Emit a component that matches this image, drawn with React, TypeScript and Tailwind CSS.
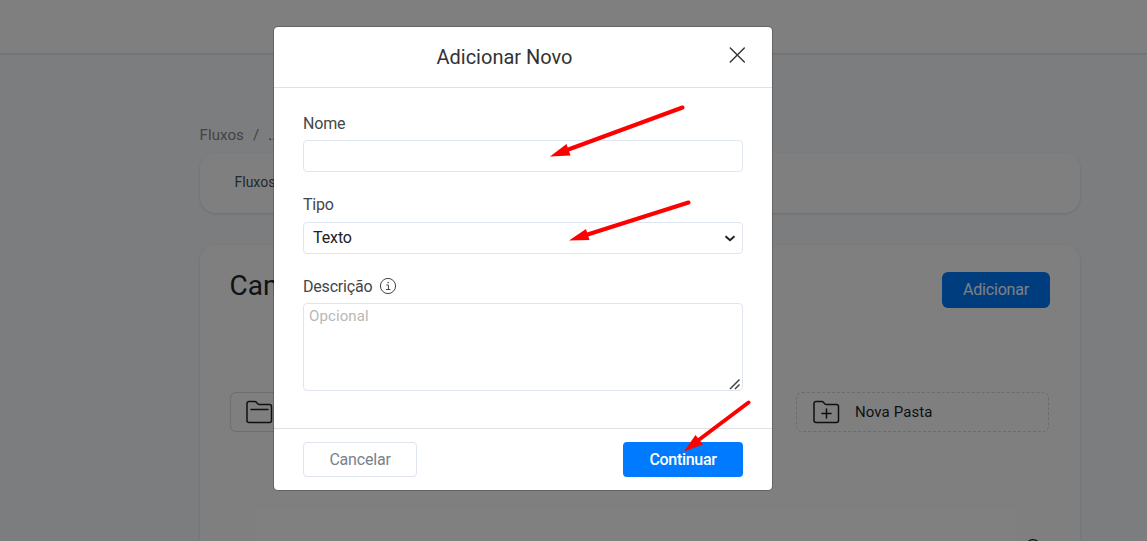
import type { ReactNode } from "react";

function FolderIcon({ plus = false }: { plus?: boolean }) {
  return (
    <svg className="-mt-px -ml-px h-6 w-7 shrink-0" viewBox="0 0 28 24" fill="none" stroke="#1f1f24" strokeWidth="1.5" strokeLinecap="round" strokeLinejoin="round">
      <path d="M2 20.5V3.500a2 2 0 0 1 2-2h5.700c.9 0 1.300.3 1.900 1l1.400 1.500c.4.4.8.5 1.400.5h10.100a2 2 0 0 1 2 2v14a2 2 0 0 1-2 2H4a2 2 0 0 1-2-2Z" />
      {plus ? <path d="M14.500 9v9M10 13.500h9" /> : <path d="M6 9.500h17" />}
    </svg>
  );
}

function InfoIcon() {
  return (
    <svg className="size-4.5" viewBox="0 0 18 18" fill="none" stroke="#444" strokeWidth="1">
      <circle cx="9" cy="9" r="7.600" />
      <path d="M7.400 8h2v4.500M7 12.500h4.400" />
      <circle cx="9.100" cy="5.600" r="0.8" fill="#444" stroke="none" />
    </svg>
  );
}

function Page() {
  return (
    <div className="flex h-full flex-col bg-[#f8fafd]">
      <header className="h-[55px] shrink-0 border-b-2 border-[#e9ebee] bg-white" />
      <main className="ml-[200px] w-[880px] pt-[69px]">
        <nav className="-ml-[0.5px] flex h-[29px] items-start text-[15px] leading-[22px] tracking-[0.1px] text-[#85878a]">
          <span>Fluxos</span>
          <span className="ml-[9px]">/</span>
          <span className="ml-[9px] text-[#444]">...</span>
        </nav>
        <section className="flex h-[60px] items-center rounded-2xl bg-white pb-0.5 pl-[34.5px] text-sm text-[#465060] shadow-[0_1px_3px_rgba(0,0,0,0.12)]">
          <span>Fluxos</span>
        </section>
        <section className="mt-8 h-[400px] rounded-2xl bg-white px-[30px] pt-[27px] shadow-[0_1px_3px_rgba(0,0,0,0.12)]">
          <div className="flex h-9 items-center justify-between">
            <h1 className="-mt-2 -ml-[0.5px] text-[28px] text-[#212529]">Cam</h1>
            <button className="h-9 w-[108px] rounded-md bg-[#007bff] text-base tracking-[-0.2px] text-white">Adicionar</button>
          </div>
          <div className="mt-[84px] flex justify-between pr-px">
            <div className="flex h-10 w-[253px] items-center rounded-md border border-[#dcdcdc] pl-[15px]">
              <FolderIcon />
            </div>
            <div className="flex h-10 w-[253px] items-center gap-[15px] rounded-md border border-dashed border-[#d8d8d8] pl-4">
              <FolderIcon plus />
              <span className="text-[15px] tracking-[0.1px] text-[#212529]">Nova Pasta</span>
            </div>
          </div>
          <div className="mt-[107px] mr-[9px] flex justify-end">
            <svg className="size-4" viewBox="0 0 16 16" fill="none" stroke="#222" strokeWidth="1.300">
              <circle cx="8" cy="7.600" r="7" />
            </svg>
          </div>
        </section>
      </main>
    </div>
  );
}

function Label({ children }: { children: ReactNode }) {
  return <div className="flex h-6 items-center gap-[7px] text-base tracking-[-0.2px] text-[#444649]">{children}</div>;
}

function Modal() {
  return (
    <div className="flex h-[465px] w-[500px] flex-col rounded-[5px] border border-black/20 bg-white bg-clip-padding">
      <div className="flex h-[61px] shrink-0 items-center border-b border-[#dee2e6] pr-[27px]">
        <h2 className="grow pl-[6px] text-center text-xl text-[#333]">Adicionar Novo</h2>
        <svg className="-mt-[5px] size-4" viewBox="0 0 16 16" fill="none" stroke="#333" strokeWidth="1.400" strokeLinecap="round">
          <path d="m1.300 1 14 14M15.300 1l-14 14" />
        </svg>
      </div>
      <div className="flex grow flex-col px-[29px] pt-6">
        <Label>Nome</Label>
        <input className="mt-1 h-8 shrink-0 rounded-[4px] border border-[#dfe5ee]" />
        <div className="mt-[21px]">
          <Label>Tipo</Label>
        </div>
        <div className="mt-[5px] flex h-8 shrink-0 items-center justify-between rounded-[4px] border border-[#dfe5ee] pr-[6px] pl-[9px] text-base tracking-[-0.1px] text-[#222]">
          <span>Texto</span>
          <svg className="h-2 w-3" viewBox="0 0 12 8" fill="none" stroke="#222" strokeWidth="2">
            <path d="M1.500 2.200 6 6.200l4.500-4" />
          </svg>
        </div>
        <div className="mt-[21px]">
          <Label>
            <span>Descrição</span>
            <span className="-mt-0.5">
              <InfoIcon />
            </span>
          </Label>
        </div>
        <div className="mt-1 flex h-[88px] shrink-0 justify-between rounded-[4px] border border-[#dfe5ee] pl-[5px] text-[15px] leading-6 tracking-[0.1px] text-[#b8b8b8]">
          <span>Opcional</span>
          <svg className="mr-px size-3 self-end" viewBox="0 0 12 12" stroke="#444" strokeWidth="1.500">
            <path d="m1 11 9.500-9.500M6 11l4.500-4.500" />
          </svg>
        </div>
      </div>
      <div className="flex h-[62px] shrink-0 items-start justify-between border-t border-[#dee2e6] px-[29px] pt-[13px]">
        <button className="h-[35px] w-[114px] rounded-[4px] border border-[#dfe5ee] text-base tracking-[-0.2px] text-[#78818a]">Cancelar</button>
        <button className="h-[35px] w-[120px] rounded-[4px] bg-[#007bff] text-base font-medium tracking-[-0.3px] text-white">Continuar</button>
      </div>
    </div>
  );
}

function Arrows() {
  return (
    <svg className="pointer-events-none absolute inset-0" width="1147" height="541" viewBox="0 0 1147 541" stroke="#f00" strokeWidth="4" strokeLinecap="round" fill="none">
      <path d="M682.500 107.500 567 150M688.500 202.500 586 235M748.500 402.500 698 440.500" />
      <g fill="#f00" stroke="none">
        <path d="m550 156.500 16.500-12.500 4 11.500Z" />
        <path d="m569 240.500 17-11.500 3.500 11Z" />
        <path d="m684 451.500 11.500-16.500 7.500 9.500Z" />
      </g>
    </svg>
  );
}

export default function App() {
  return (
    <div className="relative h-[541px] w-[1147px] overflow-hidden font-[Roboto,sans-serif]">
      <Page />
      <div className="absolute inset-0 flex items-start bg-black/50 pt-[26px] pl-[273px]">
        <Modal />
      </div>
      <Arrows />
    </div>
  );
}
